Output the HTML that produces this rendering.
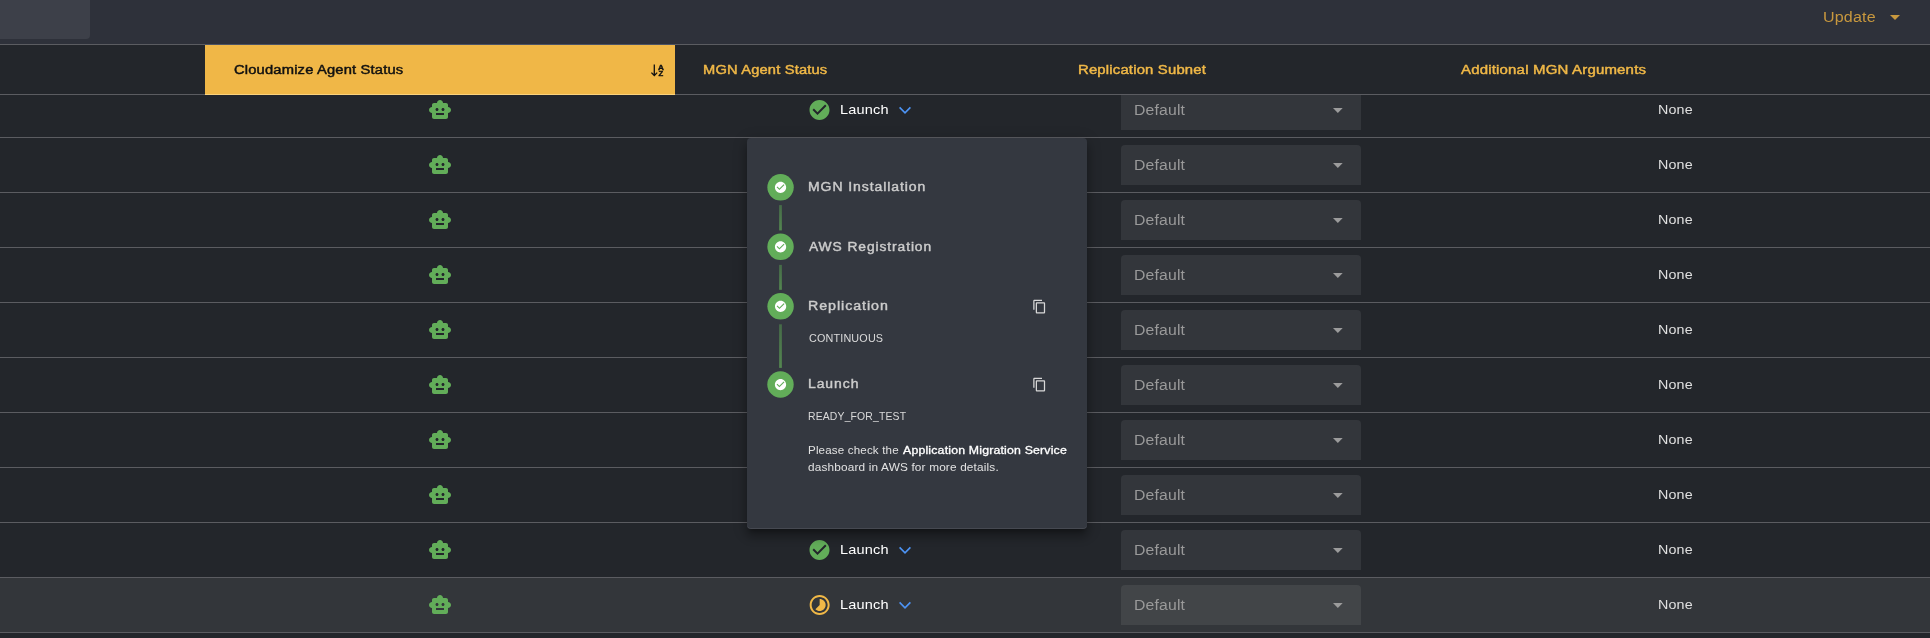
<!DOCTYPE html><html><head><meta charset="utf-8"><title>MGN</title><style>
*{box-sizing:border-box;margin:0;padding:0}
html,body{width:1930px;height:638px;overflow:hidden;background:#23262b;font-family:"Liberation Sans",sans-serif;}
.abs{position:absolute}
#top{left:0;top:0;width:1930px;height:44px;background:#2e313a}
#gbox{left:0;top:0;width:90px;height:39px;background:#3d4049;border-radius:0 0 4px 0}
.hl{left:0;width:1930px;height:1px;background:#5b5c61}
.t{position:absolute;white-space:nowrap;line-height:1;transform-origin:0 0;will-change:transform}
#ycell{left:205px;top:45px;width:470px;height:50px;background:#f0b747;border-bottom:1px solid #fbd27c}
.row{left:0;width:1930px;height:54px}
.row.hov{background:#33363a}
.sel{left:1121px;width:240px;height:40px;border-radius:4px 4px 0 0;background:#33363b}
.hov .sel{background:#424548}
.tri{position:absolute;width:0;height:0;border-left:5px solid transparent;border-right:5px solid transparent;border-top:5px solid #9a9a9a}
#pop{left:747px;top:138px;width:340px;height:391px;background:#343840;border-radius:4px;box-shadow:0 5px 5px -3px rgba(0,0,0,.3),0 8px 10px 1px rgba(0,0,0,.2),0 3px 14px 2px rgba(0,0,0,.16),inset 0 -1px 0 rgba(255,255,255,.09)}
.step{position:absolute;width:26.250px;height:26.250px;border-radius:50%;background:#62ad59}
.conn{position:absolute;left:32.300px;width:2.400px;background:#4d7a4b}
</style></head><body>
<div id="top" class="abs"><div id="gbox" class="abs"></div>
<div class="t" id="upd" style="left:1822.54px;top:10.15px;font-size:14px;font-weight:400;letter-spacing:0.15px;color:#c8983e;transform:scaleX(1.1463);">Update</div>
<div class="tri" style="left:1890px;top:15px;border-top-color:#c8983e"></div></div>
<div class="abs hl" style="top:44px"></div>
<div class="abs row" style="top:83px">
<svg class="abs" style="left:428.200px;top:15px" width="24" height="24" viewBox="0 0 24 24"><path fill="#62ad59" d="M20 9V7c0-1.1-.9-2-2-2h-3c0-1.66-1.34-3-3-3S9 3.34 9 5H6c-1.1 0-2 .9-2 2v2c-1.66 0-3 1.34-3 3s1.34 3 3 3v4c0 1.1.9 2 2 2h12c1.1 0 2-.9 2-2v-4c1.66 0 3-1.34 3-3s-1.34-3-3-3M7.5 11.5c0-.83.67-1.5 1.5-1.5s1.5.67 1.5 1.5S9.830 13 9 13s-1.5-.67-1.5-1.5M16 17H8v-2h8zm-1-4c-.83 0-1.5-.67-1.5-1.5S14.170 10 15 10s1.500.67 1.5 1.5S15.830 13 15 13"/></svg>
<svg class="abs" style="left:807px;top:15px" width="25" height="24" viewBox="-0.5 0 25 24"><circle cx="12" cy="12" r="8" fill="#23262b"/><path fill="#62ad59" d="M12 2C6.480 2 2 6.480 2 12s4.480 10 10 10 10-4.480 10-10S17.520 2 12 2m-2 15-5-5 1.410-1.410L10 14.170l7.590-7.590L19 8z"/></svg>
<div class="t" id="launch" style="left:839.56px;top:20.00px;font-size:13px;font-weight:400;letter-spacing:0.15px;color:#fff;transform:scaleX(1.1172);">Launch</div>
<svg class="abs" style="left:897px;top:21px" width="16" height="12" viewBox="0 0 16 12"><path d="M2.600 3.400 8 8.800 13.400 3.400" fill="none" stroke="#4d94f5" stroke-width="1.600"/></svg>
<div class="abs sel" style="top:7px"><div class="t" id="default" style="left:13.30px;top:13.15px;font-size:14px;font-weight:400;letter-spacing:0.15px;color:#9a9a9a;transform:scaleX(1.1258);">Default</div><svg class="abs" style="left:211.600px;top:18px" width="10" height="6" viewBox="0 0 10 6"><path d="M0 0h9.700L4.850 5z" fill="#9c9c9c"/></svg></div>
<div class="t" id="none" style="left:1657.59px;top:20.00px;font-size:13px;font-weight:400;letter-spacing:0.15px;color:#e0e0e0;transform:scaleX(1.0984);">None</div>
</div>
<div class="abs hl" style="top:137px"></div>
<div class="abs row" style="top:138px">
<svg class="abs" style="left:428.200px;top:15px" width="24" height="24" viewBox="0 0 24 24"><path fill="#62ad59" d="M20 9V7c0-1.1-.9-2-2-2h-3c0-1.66-1.34-3-3-3S9 3.34 9 5H6c-1.1 0-2 .9-2 2v2c-1.66 0-3 1.34-3 3s1.34 3 3 3v4c0 1.1.9 2 2 2h12c1.1 0 2-.9 2-2v-4c1.66 0 3-1.34 3-3s-1.34-3-3-3M7.5 11.5c0-.83.67-1.5 1.5-1.5s1.5.67 1.5 1.5S9.830 13 9 13s-1.5-.67-1.5-1.5M16 17H8v-2h8zm-1-4c-.83 0-1.5-.67-1.5-1.5S14.170 10 15 10s1.500.67 1.5 1.5S15.830 13 15 13"/></svg>
<div class="abs sel" style="top:7px"><div class="t" style="left:13.30px;top:13.15px;font-size:14px;font-weight:400;letter-spacing:0.15px;color:#9a9a9a;transform:scaleX(1.1258);">Default</div><svg class="abs" style="left:211.600px;top:18px" width="10" height="6" viewBox="0 0 10 6"><path d="M0 0h9.700L4.850 5z" fill="#9c9c9c"/></svg></div>
<div class="t" style="left:1657.59px;top:20.00px;font-size:13px;font-weight:400;letter-spacing:0.15px;color:#e0e0e0;transform:scaleX(1.0984);">None</div>
</div>
<div class="abs hl" style="top:192px"></div>
<div class="abs row" style="top:193px">
<svg class="abs" style="left:428.200px;top:15px" width="24" height="24" viewBox="0 0 24 24"><path fill="#62ad59" d="M20 9V7c0-1.1-.9-2-2-2h-3c0-1.66-1.34-3-3-3S9 3.34 9 5H6c-1.1 0-2 .9-2 2v2c-1.66 0-3 1.34-3 3s1.34 3 3 3v4c0 1.1.9 2 2 2h12c1.1 0 2-.9 2-2v-4c1.66 0 3-1.34 3-3s-1.34-3-3-3M7.5 11.5c0-.83.67-1.5 1.5-1.5s1.5.67 1.5 1.5S9.830 13 9 13s-1.5-.67-1.5-1.5M16 17H8v-2h8zm-1-4c-.83 0-1.5-.67-1.5-1.5S14.170 10 15 10s1.500.67 1.5 1.5S15.830 13 15 13"/></svg>
<div class="abs sel" style="top:7px"><div class="t" style="left:13.30px;top:13.15px;font-size:14px;font-weight:400;letter-spacing:0.15px;color:#9a9a9a;transform:scaleX(1.1258);">Default</div><svg class="abs" style="left:211.600px;top:18px" width="10" height="6" viewBox="0 0 10 6"><path d="M0 0h9.700L4.850 5z" fill="#9c9c9c"/></svg></div>
<div class="t" style="left:1657.59px;top:20.00px;font-size:13px;font-weight:400;letter-spacing:0.15px;color:#e0e0e0;transform:scaleX(1.0984);">None</div>
</div>
<div class="abs hl" style="top:247px"></div>
<div class="abs row" style="top:248px">
<svg class="abs" style="left:428.200px;top:15px" width="24" height="24" viewBox="0 0 24 24"><path fill="#62ad59" d="M20 9V7c0-1.1-.9-2-2-2h-3c0-1.66-1.34-3-3-3S9 3.34 9 5H6c-1.1 0-2 .9-2 2v2c-1.66 0-3 1.34-3 3s1.34 3 3 3v4c0 1.1.9 2 2 2h12c1.1 0 2-.9 2-2v-4c1.66 0 3-1.34 3-3s-1.34-3-3-3M7.5 11.5c0-.83.67-1.5 1.5-1.5s1.5.67 1.5 1.5S9.830 13 9 13s-1.5-.67-1.5-1.5M16 17H8v-2h8zm-1-4c-.83 0-1.5-.67-1.5-1.5S14.170 10 15 10s1.500.67 1.5 1.5S15.830 13 15 13"/></svg>
<div class="abs sel" style="top:7px"><div class="t" style="left:13.30px;top:13.15px;font-size:14px;font-weight:400;letter-spacing:0.15px;color:#9a9a9a;transform:scaleX(1.1258);">Default</div><svg class="abs" style="left:211.600px;top:18px" width="10" height="6" viewBox="0 0 10 6"><path d="M0 0h9.700L4.850 5z" fill="#9c9c9c"/></svg></div>
<div class="t" style="left:1657.59px;top:20.00px;font-size:13px;font-weight:400;letter-spacing:0.15px;color:#e0e0e0;transform:scaleX(1.0984);">None</div>
</div>
<div class="abs hl" style="top:302px"></div>
<div class="abs row" style="top:303px">
<svg class="abs" style="left:428.200px;top:15px" width="24" height="24" viewBox="0 0 24 24"><path fill="#62ad59" d="M20 9V7c0-1.1-.9-2-2-2h-3c0-1.66-1.34-3-3-3S9 3.34 9 5H6c-1.1 0-2 .9-2 2v2c-1.66 0-3 1.34-3 3s1.34 3 3 3v4c0 1.1.9 2 2 2h12c1.1 0 2-.9 2-2v-4c1.66 0 3-1.34 3-3s-1.34-3-3-3M7.5 11.5c0-.83.67-1.5 1.5-1.5s1.5.67 1.5 1.5S9.830 13 9 13s-1.5-.67-1.5-1.5M16 17H8v-2h8zm-1-4c-.83 0-1.5-.67-1.5-1.5S14.170 10 15 10s1.500.67 1.5 1.5S15.830 13 15 13"/></svg>
<div class="abs sel" style="top:7px"><div class="t" style="left:13.30px;top:13.15px;font-size:14px;font-weight:400;letter-spacing:0.15px;color:#9a9a9a;transform:scaleX(1.1258);">Default</div><svg class="abs" style="left:211.600px;top:18px" width="10" height="6" viewBox="0 0 10 6"><path d="M0 0h9.700L4.850 5z" fill="#9c9c9c"/></svg></div>
<div class="t" style="left:1657.59px;top:20.00px;font-size:13px;font-weight:400;letter-spacing:0.15px;color:#e0e0e0;transform:scaleX(1.0984);">None</div>
</div>
<div class="abs hl" style="top:357px"></div>
<div class="abs row" style="top:358px">
<svg class="abs" style="left:428.200px;top:15px" width="24" height="24" viewBox="0 0 24 24"><path fill="#62ad59" d="M20 9V7c0-1.1-.9-2-2-2h-3c0-1.66-1.34-3-3-3S9 3.34 9 5H6c-1.1 0-2 .9-2 2v2c-1.66 0-3 1.34-3 3s1.34 3 3 3v4c0 1.1.9 2 2 2h12c1.1 0 2-.9 2-2v-4c1.66 0 3-1.34 3-3s-1.34-3-3-3M7.5 11.5c0-.83.67-1.5 1.5-1.5s1.5.67 1.5 1.5S9.830 13 9 13s-1.5-.67-1.5-1.5M16 17H8v-2h8zm-1-4c-.83 0-1.5-.67-1.5-1.5S14.170 10 15 10s1.500.67 1.5 1.5S15.830 13 15 13"/></svg>
<div class="abs sel" style="top:7px"><div class="t" style="left:13.30px;top:13.15px;font-size:14px;font-weight:400;letter-spacing:0.15px;color:#9a9a9a;transform:scaleX(1.1258);">Default</div><svg class="abs" style="left:211.600px;top:18px" width="10" height="6" viewBox="0 0 10 6"><path d="M0 0h9.700L4.850 5z" fill="#9c9c9c"/></svg></div>
<div class="t" style="left:1657.59px;top:20.00px;font-size:13px;font-weight:400;letter-spacing:0.15px;color:#e0e0e0;transform:scaleX(1.0984);">None</div>
</div>
<div class="abs hl" style="top:412px"></div>
<div class="abs row" style="top:413px">
<svg class="abs" style="left:428.200px;top:15px" width="24" height="24" viewBox="0 0 24 24"><path fill="#62ad59" d="M20 9V7c0-1.1-.9-2-2-2h-3c0-1.66-1.34-3-3-3S9 3.34 9 5H6c-1.1 0-2 .9-2 2v2c-1.66 0-3 1.34-3 3s1.34 3 3 3v4c0 1.1.9 2 2 2h12c1.1 0 2-.9 2-2v-4c1.66 0 3-1.34 3-3s-1.34-3-3-3M7.5 11.5c0-.83.67-1.5 1.5-1.5s1.5.67 1.5 1.5S9.830 13 9 13s-1.5-.67-1.5-1.5M16 17H8v-2h8zm-1-4c-.83 0-1.5-.67-1.5-1.5S14.170 10 15 10s1.500.67 1.5 1.5S15.830 13 15 13"/></svg>
<div class="abs sel" style="top:7px"><div class="t" style="left:13.30px;top:13.15px;font-size:14px;font-weight:400;letter-spacing:0.15px;color:#9a9a9a;transform:scaleX(1.1258);">Default</div><svg class="abs" style="left:211.600px;top:18px" width="10" height="6" viewBox="0 0 10 6"><path d="M0 0h9.700L4.850 5z" fill="#9c9c9c"/></svg></div>
<div class="t" style="left:1657.59px;top:20.00px;font-size:13px;font-weight:400;letter-spacing:0.15px;color:#e0e0e0;transform:scaleX(1.0984);">None</div>
</div>
<div class="abs hl" style="top:467px"></div>
<div class="abs row" style="top:468px">
<svg class="abs" style="left:428.200px;top:15px" width="24" height="24" viewBox="0 0 24 24"><path fill="#62ad59" d="M20 9V7c0-1.1-.9-2-2-2h-3c0-1.66-1.34-3-3-3S9 3.34 9 5H6c-1.1 0-2 .9-2 2v2c-1.66 0-3 1.34-3 3s1.34 3 3 3v4c0 1.1.9 2 2 2h12c1.1 0 2-.9 2-2v-4c1.66 0 3-1.34 3-3s-1.34-3-3-3M7.5 11.5c0-.83.67-1.5 1.5-1.5s1.5.67 1.5 1.5S9.830 13 9 13s-1.5-.67-1.5-1.5M16 17H8v-2h8zm-1-4c-.83 0-1.5-.67-1.5-1.5S14.170 10 15 10s1.500.67 1.5 1.5S15.830 13 15 13"/></svg>
<div class="abs sel" style="top:7px"><div class="t" style="left:13.30px;top:13.15px;font-size:14px;font-weight:400;letter-spacing:0.15px;color:#9a9a9a;transform:scaleX(1.1258);">Default</div><svg class="abs" style="left:211.600px;top:18px" width="10" height="6" viewBox="0 0 10 6"><path d="M0 0h9.700L4.850 5z" fill="#9c9c9c"/></svg></div>
<div class="t" style="left:1657.59px;top:20.00px;font-size:13px;font-weight:400;letter-spacing:0.15px;color:#e0e0e0;transform:scaleX(1.0984);">None</div>
</div>
<div class="abs hl" style="top:522px"></div>
<div class="abs row" style="top:523px">
<svg class="abs" style="left:428.200px;top:15px" width="24" height="24" viewBox="0 0 24 24"><path fill="#62ad59" d="M20 9V7c0-1.1-.9-2-2-2h-3c0-1.66-1.34-3-3-3S9 3.34 9 5H6c-1.1 0-2 .9-2 2v2c-1.66 0-3 1.34-3 3s1.34 3 3 3v4c0 1.1.9 2 2 2h12c1.1 0 2-.9 2-2v-4c1.66 0 3-1.34 3-3s-1.34-3-3-3M7.5 11.5c0-.83.67-1.5 1.5-1.5s1.5.67 1.5 1.5S9.830 13 9 13s-1.5-.67-1.5-1.5M16 17H8v-2h8zm-1-4c-.83 0-1.5-.67-1.5-1.5S14.170 10 15 10s1.500.67 1.5 1.5S15.830 13 15 13"/></svg>
<svg class="abs" style="left:807px;top:15px" width="25" height="24" viewBox="-0.5 0 25 24"><circle cx="12" cy="12" r="8" fill="#23262b"/><path fill="#62ad59" d="M12 2C6.480 2 2 6.480 2 12s4.480 10 10 10 10-4.480 10-10S17.520 2 12 2m-2 15-5-5 1.410-1.410L10 14.170l7.590-7.590L19 8z"/></svg>
<div class="t" style="left:839.56px;top:20.00px;font-size:13px;font-weight:400;letter-spacing:0.15px;color:#fff;transform:scaleX(1.1172);">Launch</div>
<svg class="abs" style="left:897px;top:21px" width="16" height="12" viewBox="0 0 16 12"><path d="M2.600 3.400 8 8.800 13.400 3.400" fill="none" stroke="#4d94f5" stroke-width="1.600"/></svg>
<div class="abs sel" style="top:7px"><div class="t" style="left:13.30px;top:13.15px;font-size:14px;font-weight:400;letter-spacing:0.15px;color:#9a9a9a;transform:scaleX(1.1258);">Default</div><svg class="abs" style="left:211.600px;top:18px" width="10" height="6" viewBox="0 0 10 6"><path d="M0 0h9.700L4.850 5z" fill="#9c9c9c"/></svg></div>
<div class="t" style="left:1657.59px;top:20.00px;font-size:13px;font-weight:400;letter-spacing:0.15px;color:#e0e0e0;transform:scaleX(1.0984);">None</div>
</div>
<div class="abs hl" style="top:577px"></div>
<div class="abs row hov" style="top:578px">
<svg class="abs" style="left:428.200px;top:15px" width="24" height="24" viewBox="0 0 24 24"><path fill="#62ad59" d="M20 9V7c0-1.1-.9-2-2-2h-3c0-1.66-1.34-3-3-3S9 3.34 9 5H6c-1.1 0-2 .9-2 2v2c-1.66 0-3 1.34-3 3s1.34 3 3 3v4c0 1.1.9 2 2 2h12c1.1 0 2-.9 2-2v-4c1.66 0 3-1.34 3-3s-1.34-3-3-3M7.5 11.5c0-.83.67-1.5 1.5-1.5s1.5.67 1.5 1.5S9.830 13 9 13s-1.5-.67-1.5-1.5M16 17H8v-2h8zm-1-4c-.83 0-1.5-.67-1.5-1.5S14.170 10 15 10s1.500.67 1.5 1.5S15.830 13 15 13"/></svg>
<svg class="abs" style="left:807px;top:15px" width="25" height="24" viewBox="-0.65 0 25 24"><path fill="#f0b847" d="M16.240 7.760C15.070 6.590 13.540 6 12 6v6l-4.240 4.240c2.340 2.340 6.140 2.340 8.490 0 2.340-2.340 2.340-6.140-.01-8.480M12 2C6.480 2 2 6.480 2 12s4.480 10 10 10 10-4.480 10-10S17.520 2 12 2m0 18c-4.420 0-8-3.580-8-8s3.580-8 8-8 8 3.580 8 8-3.580 8-8 8"/></svg>
<div class="t" style="left:839.56px;top:20.00px;font-size:13px;font-weight:400;letter-spacing:0.15px;color:#fff;transform:scaleX(1.1172);">Launch</div>
<svg class="abs" style="left:897px;top:21px" width="16" height="12" viewBox="0 0 16 12"><path d="M2.600 3.400 8 8.800 13.400 3.400" fill="none" stroke="#4d94f5" stroke-width="1.600"/></svg>
<div class="abs sel" style="top:7px"><div class="t" style="left:13.30px;top:13.15px;font-size:14px;font-weight:400;letter-spacing:0.15px;color:#9a9a9a;transform:scaleX(1.1258);">Default</div><svg class="abs" style="left:211.600px;top:18px" width="10" height="6" viewBox="0 0 10 6"><path d="M0 0h9.700L4.850 5z" fill="#9c9c9c"/></svg></div>
<div class="t" style="left:1657.59px;top:20.00px;font-size:13px;font-weight:400;letter-spacing:0.15px;color:#e0e0e0;transform:scaleX(1.0984);">None</div>
</div>
<div class="abs hl" style="top:632px"></div>
<div class="abs row" style="top:633px">
<svg class="abs" style="left:428.200px;top:15px" width="24" height="24" viewBox="0 0 24 24"><path fill="#62ad59" d="M20 9V7c0-1.1-.9-2-2-2h-3c0-1.66-1.34-3-3-3S9 3.34 9 5H6c-1.1 0-2 .9-2 2v2c-1.66 0-3 1.34-3 3s1.34 3 3 3v4c0 1.1.9 2 2 2h12c1.1 0 2-.9 2-2v-4c1.66 0 3-1.34 3-3s-1.34-3-3-3M7.5 11.5c0-.83.67-1.5 1.5-1.5s1.5.67 1.5 1.5S9.830 13 9 13s-1.5-.67-1.5-1.5M16 17H8v-2h8zm-1-4c-.83 0-1.5-.67-1.5-1.5S14.170 10 15 10s1.500.67 1.5 1.5S15.830 13 15 13"/></svg>
<div class="abs sel" style="top:7px"><div class="t" style="left:13.30px;top:13.15px;font-size:14px;font-weight:400;letter-spacing:0.15px;color:#9a9a9a;transform:scaleX(1.1258);">Default</div><svg class="abs" style="left:211.600px;top:18px" width="10" height="6" viewBox="0 0 10 6"><path d="M0 0h9.700L4.850 5z" fill="#9c9c9c"/></svg></div>
<div class="t" style="left:1657.59px;top:20.00px;font-size:13px;font-weight:400;letter-spacing:0.15px;color:#e0e0e0;transform:scaleX(1.0984);">None</div>
</div>
<div class="abs hl" style="top:687px"></div>
<div class="abs" style="left:0;top:45px;width:1930px;height:49px;background:#23262b"></div>
<div class="abs hl" style="top:94px"></div>
<div id="ycell" class="abs"></div>
<div class="abs" style="left:205px;top:44px;width:470px;height:1px;background:#4d5364"></div>
<div class="t" id="h1" style="left:233.90px;top:64.22px;font-size:12.5px;font-weight:400;letter-spacing:0.15px;color:#111;transform:scaleX(1.1776);-webkit-text-stroke:0.45px #111;">Cloudamize Agent Status</div>
<svg class="abs" id="sort" style="left:650px;top:63px;will-change:transform" width="15" height="14" viewBox="0 0 15 14"><path d="M4.300 1.400v11M1.400 9.600l2.900 2.900 2.900-2.900" fill="none" stroke="#111" stroke-width="1.300"/><text x="8.100" y="6.700" font-size="6.600" font-weight="700" font-family="Liberation Sans, sans-serif" fill="#111" stroke="#111" stroke-width=".35" textLength="5.900" lengthAdjust="spacingAndGlyphs">A</text><text x="8.600" y="12.700" font-size="6.600" font-weight="700" font-family="Liberation Sans, sans-serif" fill="#111" stroke="#111" stroke-width=".35" textLength="4.700" lengthAdjust="spacingAndGlyphs">Z</text></svg>
<div class="t" id="h2" style="left:702.53px;top:64.22px;font-size:12.5px;font-weight:400;letter-spacing:0.15px;color:#f0b847;transform:scaleX(1.1738);-webkit-text-stroke:0.45px #f0b847;">MGN Agent Status</div>
<div class="t" id="h3" style="left:1077.51px;top:64.22px;font-size:12.5px;font-weight:400;letter-spacing:0.15px;color:#f0b847;transform:scaleX(1.1896);-webkit-text-stroke:0.45px #f0b847;">Replication Subnet</div>
<div class="t" id="h4" style="left:1460.80px;top:64.22px;font-size:12.5px;font-weight:400;letter-spacing:0.15px;color:#f0b847;transform:scaleX(1.1995);-webkit-text-stroke:0.45px #f0b847;">Additional MGN Arguments</div>
<div id="pop" class="abs">
<svg class="abs" style="left:0;top:0" width="340" height="391" viewBox="747 138 340 391"><defs><linearGradient id="cg" x1="0" y1="0" x2="0" y2="1"><stop offset="0" stop-color="#466c48"/><stop offset="1" stop-color="#548750"/></linearGradient></defs><rect x="779.15" y="205.1" width="2.700" height="25.3" fill="url(#cg)"/><rect x="779.15" y="264.9" width="2.700" height="24.9" fill="url(#cg)"/><rect x="779.15" y="324.3" width="2.700" height="43.6" fill="url(#cg)"/><circle cx="780.55" cy="187.3" r="13.200" fill="#62ad59"/><g transform="translate(773.800 180.550) scale(0.5625)"><circle cx="12" cy="12" r="8" fill="#62ad59"/><path fill="#fff" d="M12 2C6.480 2 2 6.480 2 12s4.480 10 10 10 10-4.480 10-10S17.520 2 12 2m-2 15-5-5 1.410-1.410L10 14.170l7.590-7.590L19 8z"/></g><circle cx="780.55" cy="246.8" r="13.200" fill="#62ad59"/><g transform="translate(773.800 240.050) scale(0.5625)"><circle cx="12" cy="12" r="8" fill="#62ad59"/><path fill="#fff" d="M12 2C6.480 2 2 6.480 2 12s4.480 10 10 10 10-4.480 10-10S17.520 2 12 2m-2 15-5-5 1.410-1.410L10 14.170l7.590-7.590L19 8z"/></g><circle cx="780.6" cy="306.3" r="13.200" fill="#62ad59"/><g transform="translate(773.850 299.550) scale(0.5625)"><circle cx="12" cy="12" r="8" fill="#62ad59"/><path fill="#fff" d="M12 2C6.480 2 2 6.480 2 12s4.480 10 10 10 10-4.480 10-10S17.520 2 12 2m-2 15-5-5 1.410-1.410L10 14.170l7.590-7.590L19 8z"/></g><circle cx="780.5" cy="384.5" r="13.200" fill="#62ad59"/><g transform="translate(773.750 377.750) scale(0.5625)"><circle cx="12" cy="12" r="8" fill="#62ad59"/><path fill="#fff" d="M12 2C6.480 2 2 6.480 2 12s4.480 10 10 10 10-4.480 10-10S17.520 2 12 2m-2 15-5-5 1.410-1.410L10 14.170l7.590-7.590L19 8z"/></g></svg>
<div class="t" id="s1" style="left:60.75px;top:43.04px;font-size:12px;font-weight:400;letter-spacing:0.8px;color:#cccccc;transform:scaleX(1.1647);-webkit-text-stroke:0.4px #cccccc;">MGN Installation</div>
<div class="t" id="s2" style="left:61.70px;top:103.04px;font-size:12px;font-weight:400;letter-spacing:0.8px;color:#cccccc;transform:scaleX(1.1494);-webkit-text-stroke:0.4px #cccccc;">AWS Registration</div>
<div class="t" id="s3" style="left:60.93px;top:162.04px;font-size:12px;font-weight:400;letter-spacing:0.8px;color:#cccccc;transform:scaleX(1.186);-webkit-text-stroke:0.4px #cccccc;">Replication</div>
<div class="t" id="s4" style="left:61.34px;top:240.04px;font-size:12px;font-weight:400;letter-spacing:0.8px;color:#cccccc;transform:scaleX(1.1617);-webkit-text-stroke:0.4px #cccccc;">Launch</div>
<svg class="abs" style="left:284.7px;top:161.2px" width="15" height="15" viewBox="0 0 24 24"><path fill="#d8d8d8" d="M16 1H4c-1.1 0-2 .9-2 2v14h2V3h12zm3 4H8c-1.1 0-2 .9-2 2v14c0 1.1.9 2 2 2h11c1.1 0 2-.9 2-2V7c0-1.1-.9-2-2-2m0 16H8V7h11z"/></svg>
<svg class="abs" style="left:284.7px;top:239.2px" width="15" height="15" viewBox="0 0 24 24"><path fill="#d8d8d8" d="M16 1H4c-1.1 0-2 .9-2 2v14h2V3h12zm3 4H8c-1.1 0-2 .9-2 2v14c0 1.1.9 2 2 2h11c1.1 0 2-.9 2-2V7c0-1.1-.9-2-2-2m0 16H8V7h11z"/></svg>
<div class="t" id="c1" style="left:62.25px;top:196.07px;font-size:10.2px;font-weight:400;letter-spacing:0.15px;color:#dadada;transform:scaleX(1.0603);">CONTINUOUS</div>
<div class="t" id="c2" style="left:60.70px;top:274.07px;font-size:10.2px;font-weight:400;letter-spacing:0.15px;color:#dadada;transform:scaleX(1.0218);">READY_FOR_TEST</div>
<div class="t" id="p1" style="left:60.70px;top:307.11px;font-size:10.5px;font-weight:400;letter-spacing:0.15px;color:#e2e2e2;transform:scaleX(1.1019);">Please check the</div>
<div class="t" id="p2" style="left:61.05px;top:324.11px;font-size:10.5px;font-weight:400;letter-spacing:0.15px;color:#e2e2e2;transform:scaleX(1.1236);">dashboard in AWS for more details.</div>
<div class="t" id="p1b" style="left:156.00px;top:307.97px;font-size:10.2px;font-weight:400;letter-spacing:0.15px;color:#fff;transform:scaleX(1.2082);-webkit-text-stroke:0.3px #fff;">Application Migration Service</div>
</div>
</body></html>
